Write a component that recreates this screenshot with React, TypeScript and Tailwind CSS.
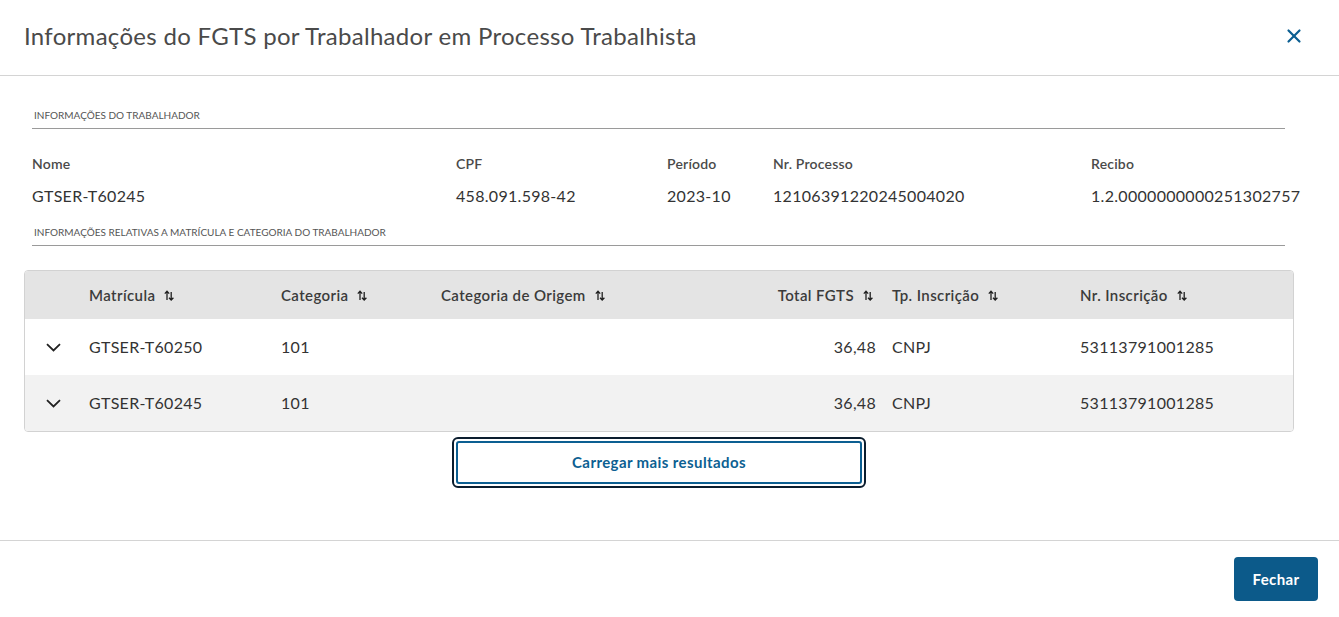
import { X } from 'lucide-react';

const font = { fontFamily: 'Lato, "Noto Sans", sans-serif' };

function SortIcon() {
  return (
    <svg width="10" height="11" viewBox="0 0 10 11" className="ml-[9px] shrink-0 text-[#1f1f1f]">
      <path d="M3 10V1.5M0.8 3.6L3 1.3L5.2 3.6" fill="none" stroke="currentColor" strokeWidth="1.3" />
      <path d="M7.2 2V10M5 7.7L7.2 10L9.4 7.7" fill="none" stroke="currentColor" strokeWidth="1.3" />
    </svg>
  );
}

function Chevron() {
  return (
    <svg width="15" height="9" viewBox="0 0 15 9" className="text-[#222]">
      <path d="M1 1.2L7.5 7.5L14 1.2" fill="none" stroke="currentColor" strokeWidth="1.8" />
    </svg>
  );
}

const fields = [
  { label: 'Nome', value: 'GTSER-T60245' },
  { label: 'CPF', value: '458.091.598-42' },
  { label: 'Período', value: '2023-10' },
  { label: 'Nr. Processo', value: '12106391220245004020' },
  { label: 'Recibo', value: '1.2.0000000000251302757' },
];

const rows = [
  { matricula: 'GTSER-T60250', categoria: '101', total: '36,48', tp: 'CNPJ', nr: '53113791001285', bg: 'bg-white' },
  { matricula: 'GTSER-T60245', categoria: '101', total: '36,48', tp: 'CNPJ', nr: '53113791001285', bg: 'bg-[#f2f2f2]' },
];

const cols = 'grid grid-cols-[64px_192px_160px_250px_185px_204px_1fr] items-center';

export default function App() {
  return (
    <div className="w-[1339px] h-[617px] bg-white flex flex-col text-[#333]" style={font}>
      {/* header */}
      <div className="h-[76px] shrink-0 flex items-center justify-between pl-6 pr-[34px] pb-[3px] border-b border-[#d4d4d4]">
        <h2 className="text-[24px] text-[#4a4a4a] tracking-[0.3px]">Informações do FGTS por Trabalhador em Processo Trabalhista</h2>
        <X size={22} strokeWidth={2.4} className="text-[#0c5f92]" />
      </div>

      {/* body */}
      <div className="flex-1 pl-6 pr-[45px]">
        <div className="pl-2 pr-[9px]">
          <div className="mt-[33px] border-b border-[#9a9a9a] pb-[6px] pl-[2px] text-[10px] leading-[13px] uppercase text-[#555]">
            Informações do trabalhador
          </div>
          <div className="grid grid-cols-[424px_211px_106px_318px_1fr] mt-[27px]">
            {fields.map(f => (
              <div key={f.label} className="flex flex-col">
                <span className="text-[14px] leading-[16px] font-semibold text-[#4a4a4a] tracking-[0.2px]">{f.label}</span>
                <span className="mt-[15px] text-[16px] leading-[18px] tracking-[0.3px] whitespace-nowrap">{f.value}</span>
              </div>
            ))}
          </div>
          <div className="mt-[21px] border-b border-[#9a9a9a] pb-[6px] pl-[2px] text-[10px] leading-[13px] uppercase text-[#555]">
            Informações relativas a matrícula e categoria do trabalhador
          </div>
        </div>

        {/* table */}
        <div className="mt-[24px] border border-[#d2d2d2] rounded-[4px] overflow-hidden">
          <div className={`${cols} h-[48px] bg-[#e4e4e4] text-[15px] tracking-[0.4px] font-semibold text-[#3b3b3b]`}>
            <div />
            <div className="flex items-center">Matrícula<SortIcon /></div>
            <div className="flex items-center">Categoria<SortIcon /></div>
            <div className="flex items-center">Categoria de Origem<SortIcon /></div>
            <div className="flex items-center justify-end pr-[3px]">Total FGTS<SortIcon /></div>
            <div className="flex items-center pl-4">Tp. Inscrição<SortIcon /></div>
            <div className="flex items-center">Nr. Inscrição<SortIcon /></div>
          </div>
          {rows.map(r => (
            <div key={r.matricula} className={`${cols} h-[56px] ${r.bg} text-[16px] tracking-[0.3px]`}>
              <div className="flex items-center pl-[21px]">
                <Chevron />
              </div>
              <div>{r.matricula}</div>
              <div>{r.categoria}</div>
              <div />
              <div className="text-right">{r.total}</div>
              <div className="pl-4">{r.tp}</div>
              <div>{r.nr}</div>
            </div>
          ))}
        </div>

        <div className="flex justify-center mt-[5px]">
          <button className="w-[414px] h-[51px] rounded-[6px] border-2 border-[#0b1d2e] p-[2px]">
            <span className="flex h-full w-full items-center justify-center rounded-[3px] border-2 border-[#0c5f92] text-[15px] tracking-[0.4px] font-bold text-[#0c5f92]">
              Carregar mais resultados
            </span>
          </button>
        </div>
      </div>

      {/* footer */}
      <div className="h-[77px] shrink-0 border-t border-[#d4d4d4] flex items-center justify-end pr-[21px]">
        <button className="w-[84px] h-[44px] rounded-[4px] bg-[#0c5a8a] text-white text-[15px] tracking-[0.4px] font-bold">Fechar</button>
      </div>
    </div>
  );
}
